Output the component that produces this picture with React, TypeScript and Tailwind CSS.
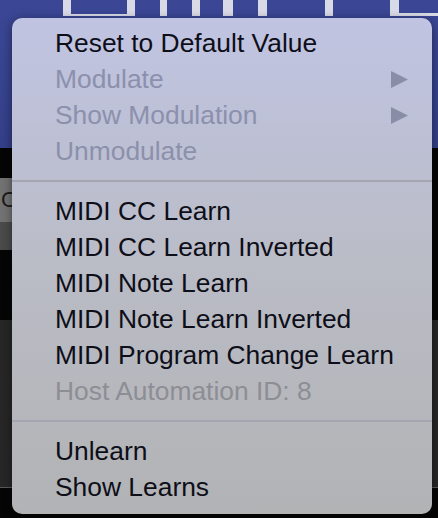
import React from 'react';

type Item = { label: string; disabled?: boolean; submenu?: boolean };

const sections: Item[][] = [
  [
    { label: 'Reset to Default Value' },
    { label: 'Modulate', disabled: true, submenu: true },
    { label: 'Show Modulation', disabled: true, submenu: true },
    { label: 'Unmodulate', disabled: true },
  ],
  [
    { label: 'MIDI CC Learn' },
    { label: 'MIDI CC Learn Inverted' },
    { label: 'MIDI Note Learn' },
    { label: 'MIDI Note Learn Inverted' },
    { label: 'MIDI Program Change Learn' },
    { label: 'Host Automation ID: 8', disabled: true },
  ],
  [{ label: 'Unlearn' }, { label: 'Show Learns' }],
];

const Arrow = () => (
  <svg width="17" height="17" viewBox="0 0 17 17" className="shrink-0">
    <polygon points="0,0 17,8.5 0,17" fill="#898da6" />
  </svg>
);

const MenuRow: React.FC<{ item: Item; section: number }> = ({ item, section }) => (
  <div className="flex items-center justify-between h-[36px] pl-[43px] pr-[24px]">
    <span
      className={`text-[26.4px] leading-none ${
        item.disabled
          ? section === 0
            ? 'text-[#8c90ac]'
            : 'text-[#8d8e94]'
          : 'text-[#0e0e18]'
      }`}
    >
      {item.label}
    </span>
    {item.submenu && <Arrow />}
  </div>
);

const App: React.FC = () => {
  return (
    <div
      className="relative w-[438px] h-[518px] overflow-hidden bg-[#050505]"
      style={{ fontFamily: '"Liberation Sans", Arial, sans-serif' }}
    >
      {/* blurred plugin UI behind the menu */}
      <div className="h-[148px] bg-gradient-to-b from-[#3b4795] to-[#333f88] flex items-start">
        <div className="flex w-full h-[16px] gap-0">
          <div className="w-[63px]" />
          <div className="w-[72px] h-[16px] border-x-[8px] border-b-[2px] border-[#d8dae6]" />
          <div className="w-[25px]" />
          <div className="w-[7px] bg-[#d8dae6]" />
          <div className="w-[25px]" />
          <div className="w-[8px] bg-[#d8dae6]" />
          <div className="w-[23px]" />
          <div className="w-[10px] bg-[#d8dae6]" />
          <div className="w-[25px]" />
          <div className="w-[9px] bg-[#d8dae6]" />
          <div className="w-[58px]" />
          <div className="w-[8px] bg-[#d8dae6]" />
          <div className="w-[57px]" />
          <div className="flex-1 border-l-[9px] border-b-[3px] border-[#d8dae6]" />
        </div>
      </div>
      <div className="mt-[30px] w-[40px] h-[44px] bg-[#727272] text-[#1a1a1a] text-[22px] leading-[44px] pl-[1px]">
        C
      </div>
      <div className="w-[40px] h-[28px] bg-[#4a4a4a]" />
      <div className="mt-[70px] h-[168px] bg-[#262626] border-b border-[#5a5a5a]" />

      {/* context menu */}
      <div className="absolute left-[12px] top-[18px] w-[420px] h-[496px] rounded-[10px] bg-gradient-to-b from-[#c0c4e2] via-[#babcc6] to-[#b2b3b5] shadow-[0_2px_10px_rgba(0,0,0,0.45)] pt-[7px] pb-[9px] flex flex-col">
        {sections.map((items, s) => (
          <div key={s}>
            {s > 0 && (
              <div className="h-[24px] flex items-center">
                <div className="w-full h-[2px] bg-[#a4a6b2]" />
              </div>
            )}
            {items.map((item) => (
              <MenuRow key={item.label} item={item} section={s} />
            ))}
          </div>
        ))}
      </div>
    </div>
  );
};

export default App;
